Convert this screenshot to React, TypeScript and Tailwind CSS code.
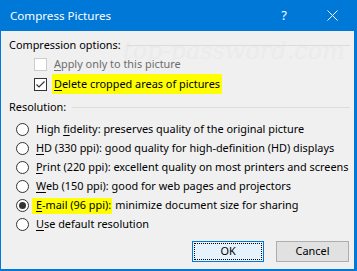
import { ReactNode } from "react";

const font = { fontFamily: '"Noto Sans", "Open Sans", sans-serif' };

function Checkbox({ checked, disabled }: { checked?: boolean; disabled?: boolean }) {
    return (
        <div
            className={`w-[13px] h-[13px] shrink-0 border bg-white flex items-center justify-center ${
                disabled ? "border-[#cccccc] bg-[#f7f7f7]" : "border-[#333333]"
            }`}
        >
            {checked && (
                <svg width="11" height="11" viewBox="0 0 11 11">
                    <path d="M1.5 5.5 L4 8 L9.5 2.5" fill="none" stroke="#333" strokeWidth="1.2" />
                </svg>
            )}
        </div>
    );
}

function Radio({ checked }: { checked?: boolean }) {
    return (
        <div className="w-[13px] h-[13px] shrink-0 rounded-full border border-[#333333] bg-white flex items-center justify-center">
            {checked && <div className="w-[7px] h-[7px] rounded-full bg-[#333333]" />}
        </div>
    );
}

function GroupLabel({ children }: { children: ReactNode }) {
    return (
        <div className="flex items-center h-4 pr-1">
            <span className="mr-1.5 whitespace-nowrap">{children}</span>
            <div className="flex-1 h-px bg-[#dcdcdc]" />
        </div>
    );
}

// access key underline
function U({ children }: { children: ReactNode }) {
    return <span className="underline underline-offset-2">{children}</span>;
}

export default function App() {
    return (
        <div className="w-[357px] h-[271px] bg-[#0078d7] flex flex-col text-[10.9px] text-black whitespace-nowrap" style={font}>
            {/* Title bar */}
            <div className="h-[31px] flex items-center text-white pl-[10px] shrink-0 text-[11.6px]">
                <span className="flex-1">Compress Pictures</span>
                <span className="w-4 text-center mr-[35px] text-[13px]">?</span>
                <svg width="11" height="11" viewBox="0 0 11 11" className="mr-[19px]">
                    <path d="M0.5 0.5 L10.5 10.5 M10.5 0.5 L0.5 10.5" stroke="white" strokeWidth="1" />
                </svg>
            </div>

            {/* Body */}
            <div className="relative flex-1 bg-[#f0f0f0] ml-px mr-[3px] mb-[2px] pl-2 pt-[6px] flex flex-col overflow-hidden">
                {/* faint watermark */}
                <div className="absolute left-[122px] top-[8px] text-[24px] italic text-[#ebebeb] pointer-events-none leading-none" style={{ fontFamily: '"DejaVu Serif", serif' }}>
                    top-password.com
                </div>

                <div className="relative flex flex-col">
                    <GroupLabel>Compression options:</GroupLabel>
                    <div className="flex items-center h-5 mt-px pl-[25px]">
                        <Checkbox disabled />
                        <span className="ml-[7px] text-[#6d6d6d]">
                            <U>A</U>pply only to this picture
                        </span>
                    </div>
                    <div className="flex items-center h-5 pl-[25px]">
                        <Checkbox checked />
                        <span className="ml-[5px] bg-[#ffff00] h-5 flex items-center pl-0.5 pr-[2px]">
                            <span>
                                <U>D</U>elete cropped areas of pictures
                            </span>
                        </span>
                    </div>

                    <div className="mt-[5px]">
                        <GroupLabel>Resolution:</GroupLabel>
                    </div>
                    <div className="flex flex-col mt-[5px] pl-[7px]">
                        <div className="flex items-center h-[19px]">
                            <Radio />
                            <span className="ml-[7px]">
                                High <U>f</U>idelity: preserves quality of the original picture
                            </span>
                        </div>
                        <div className="flex items-center h-[19px]">
                            <Radio />
                            <span className="ml-[7px]">
                                <U>H</U>D (330 ppi): good quality for high-definition (HD) displays
                            </span>
                        </div>
                        <div className="flex items-center h-[19px]">
                            <Radio />
                            <span className="ml-[7px]">
                                <U>P</U>rint (220 ppi): excellent quality on most printers and screens
                            </span>
                        </div>
                        <div className="flex items-center h-[19px]">
                            <Radio />
                            <span className="ml-[7px]">
                                <U>W</U>eb (150 ppi): good for web pages and projectors
                            </span>
                        </div>
                        <div className="flex items-center h-[19px]">
                            <Radio checked />
                            <span className="ml-[3px] bg-[#ffff00] h-4 flex items-center pl-1 pr-px">
                                <span>
                                    <U>E</U>-mail (96 ppi):
                                </span>
                            </span>
                            <span className="ml-[3px]">minimize document size for sharing</span>
                        </div>
                        <div className="flex items-center h-[19px]">
                            <Radio />
                            <span className="ml-[7px]">
                                <U>U</U>se default resolution
                            </span>
                        </div>
                    </div>

                    <div className="flex justify-end gap-3 mt-[7px] pr-[5px]">
                        <button className="w-[72px] h-[21px] bg-[#e5f1fb] border border-[#0078d7] p-px">
                            <div className="w-full h-full border border-dotted border-black flex items-center justify-center">
                                OK
                            </div>
                        </button>
                        <button className="w-[73px] h-[21px] bg-[#e1e1e1] border border-[#adadad] flex items-center justify-center">
                            Cancel
                        </button>
                    </div>
                </div>
            </div>
        </div>
    );
}
